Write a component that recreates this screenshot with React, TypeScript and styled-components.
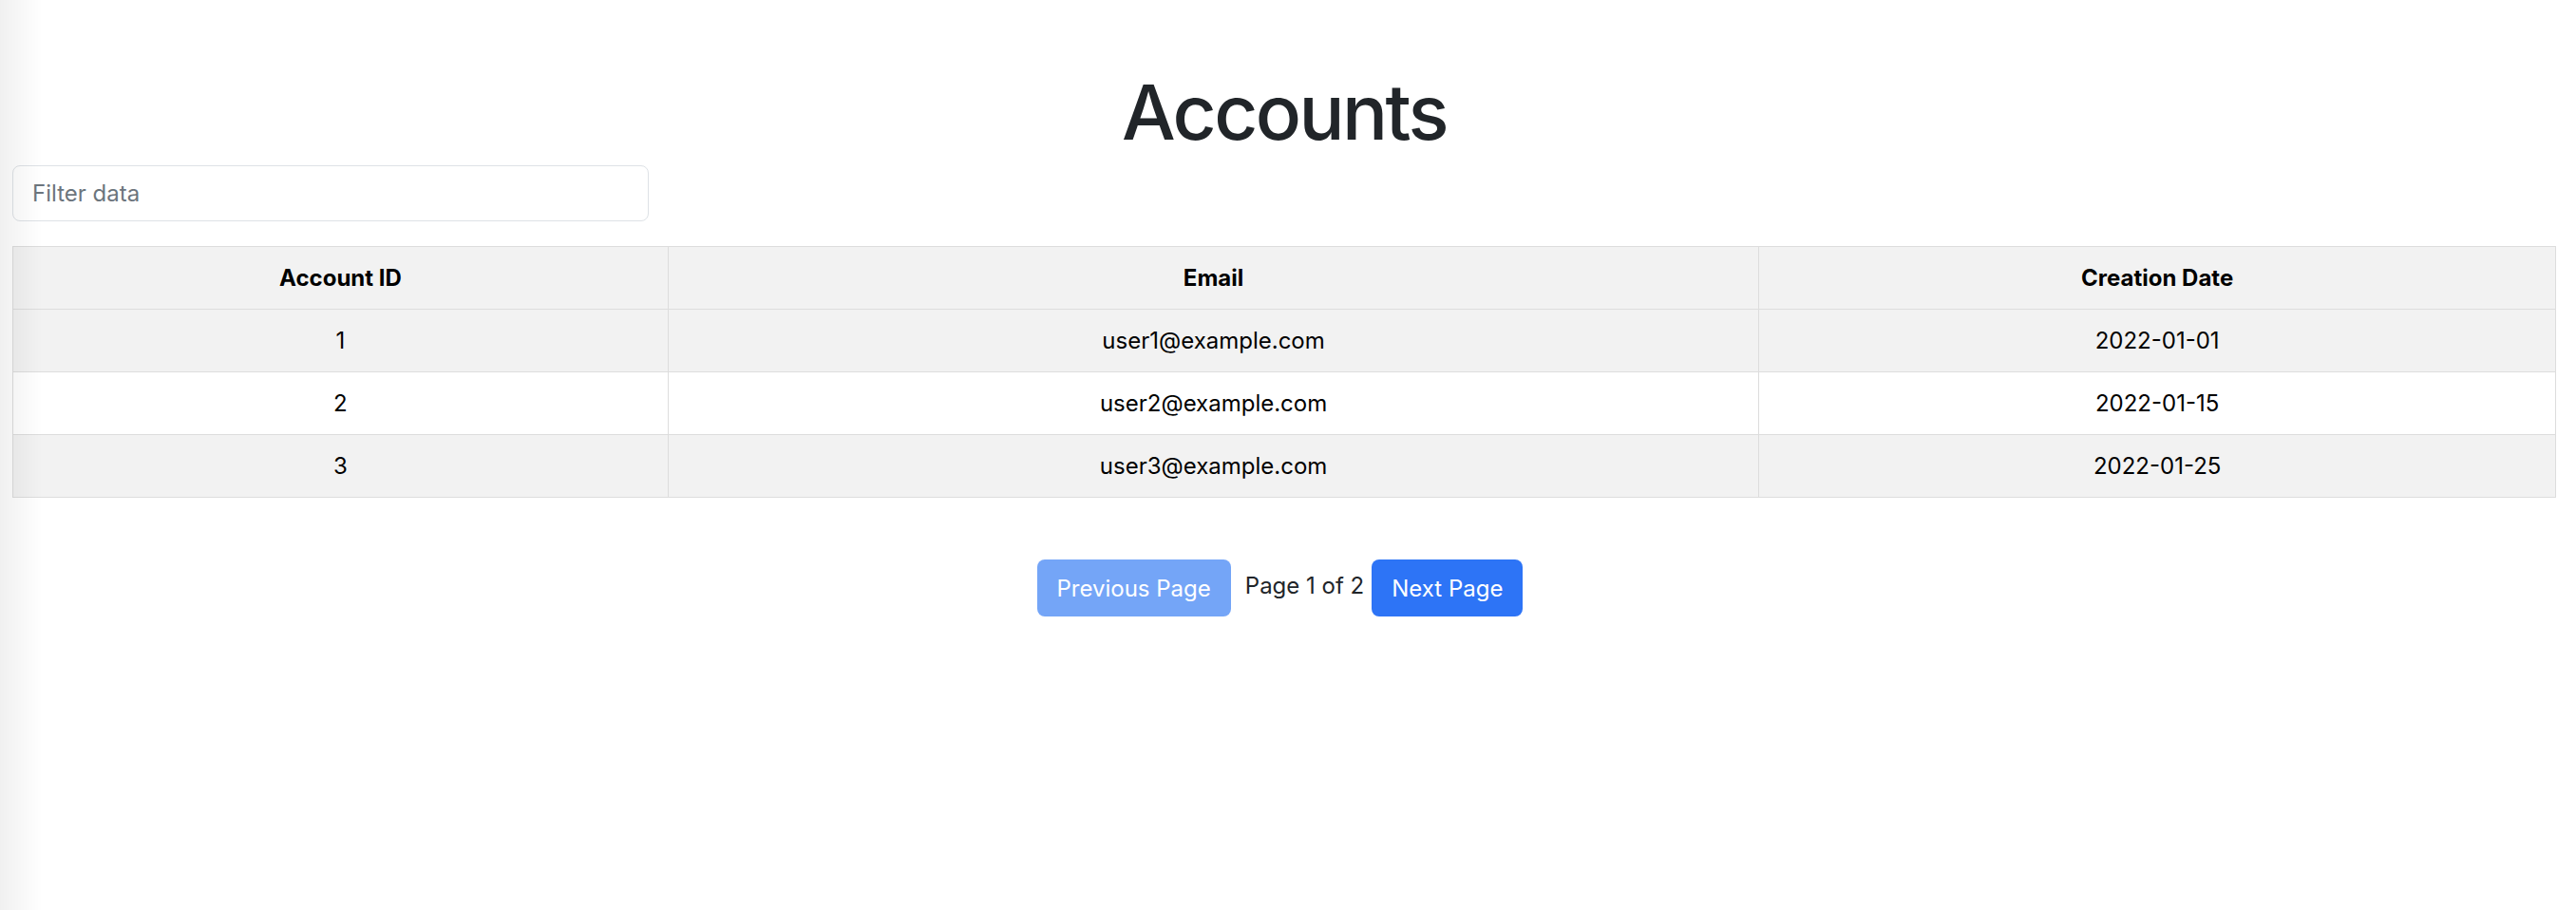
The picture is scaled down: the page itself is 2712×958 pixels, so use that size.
import React from "react";
import styled, { createGlobalStyle } from "styled-components";

const GlobalStyle = createGlobalStyle`
  html, body {
    margin: 0;
    padding: 0;
    background: #ffffff;
  }
  body {
    font-family: Inter, "Noto Sans", "Liberation Sans", sans-serif;
    color: #212529;
  }
  body::before {
    content: "";
    position: fixed;
    left: 0;
    top: 0;
    bottom: 0;
    width: 44px;
    pointer-events: none;
    background: linear-gradient(to right, rgba(0, 0, 0, 0.06), rgba(0, 0, 0, 0));
    z-index: 10;
  }
`;

const Page = styled.div`
  display: flex;
  flex-direction: column;
  padding: 69px 21px 0 13px;
`;

const Title = styled.h1`
  margin: 0;
  text-align: center;
  font-size: 80px;
  line-height: 97px;
  font-weight: 500;
  letter-spacing: -2.6px;
  color: #212529;
`;

const FilterInput = styled.input`
  box-sizing: border-box;
  margin-top: 8px;
  width: 670px;
  height: 59px;
  padding: 0 20px;
  border: 1px solid #dee2e6;
  border-radius: 8px;
  font-family: inherit;
  font-size: 24px;
  color: #212529;
  outline: none;
  &::placeholder {
    color: #6c757d;
  }
`;

const Table = styled.table`
  margin-top: 26px;
  width: 100%;
  border-collapse: collapse;
  border: 1px solid #dddddd;
  font-size: 24px;
`;

const Cell = styled.td<{ $head?: boolean }>`
  border: 1px solid #dddddd;
  height: 65px;
  padding: 0 12px;
  text-align: center;
  vertical-align: middle;
  font-weight: ${(p) => (p.$head ? 700 : 400)};
  color: #000000;
`;

const Row = styled.tr<{ $shade: boolean }>`
  background: ${(p) => (p.$shade ? "#f2f2f2" : "#ffffff")};
`;

const Pager = styled.div`
  display: flex;
  justify-content: center;
  align-items: center;
  margin-top: 65px;
  padding-right: 9px;
`;

const PagerButton = styled.button<{ $disabled?: boolean }>`
  height: 60px;
  padding: 0 21px;
  border: none;
  border-radius: 8px;
  font-family: inherit;
  font-size: 24px;
  color: #ffffff;
  background: ${(p) => (p.$disabled ? "#74a5f7" : "#2d74f6")};
  cursor: ${(p) => (p.$disabled ? "default" : "pointer")};
`;

const PageInfo = styled.span`
  margin: 0 8px 0 15px;
  padding-bottom: 6px;
  font-size: 24px;
  color: #212529;
`;

const rows = [
  { id: 1, email: "user1@example.com", date: "2022-01-01" },
  { id: 2, email: "user2@example.com", date: "2022-01-15" },
  { id: 3, email: "user3@example.com", date: "2022-01-25" },
];

export default function App() {
  return (
    <>
      <GlobalStyle />
      <Page>
        <Title>Accounts</Title>
        <FilterInput placeholder="Filter data" />
        <Table>
          <colgroup>
            <col style={{ width: "25.77%" }} />
            <col style={{ width: "42.9%" }} />
            <col style={{ width: "31.33%" }} />
          </colgroup>
          <thead>
            <Row $shade>
              <Cell as="th" $head>
                Account ID
              </Cell>
              <Cell as="th" $head>
                Email
              </Cell>
              <Cell as="th" $head>
                Creation Date
              </Cell>
            </Row>
          </thead>
          <tbody>
            {rows.map((r, i) => (
              <Row key={r.id} $shade={i % 2 === 0}>
                <Cell>{r.id}</Cell>
                <Cell>{r.email}</Cell>
                <Cell>{r.date}</Cell>
              </Row>
            ))}
          </tbody>
        </Table>
        <Pager>
          <PagerButton $disabled disabled>
            Previous Page
          </PagerButton>
          <PageInfo>Page 1 of 2</PageInfo>
          <PagerButton>Next Page</PagerButton>
        </Pager>
      </Page>
    </>
  );
}
